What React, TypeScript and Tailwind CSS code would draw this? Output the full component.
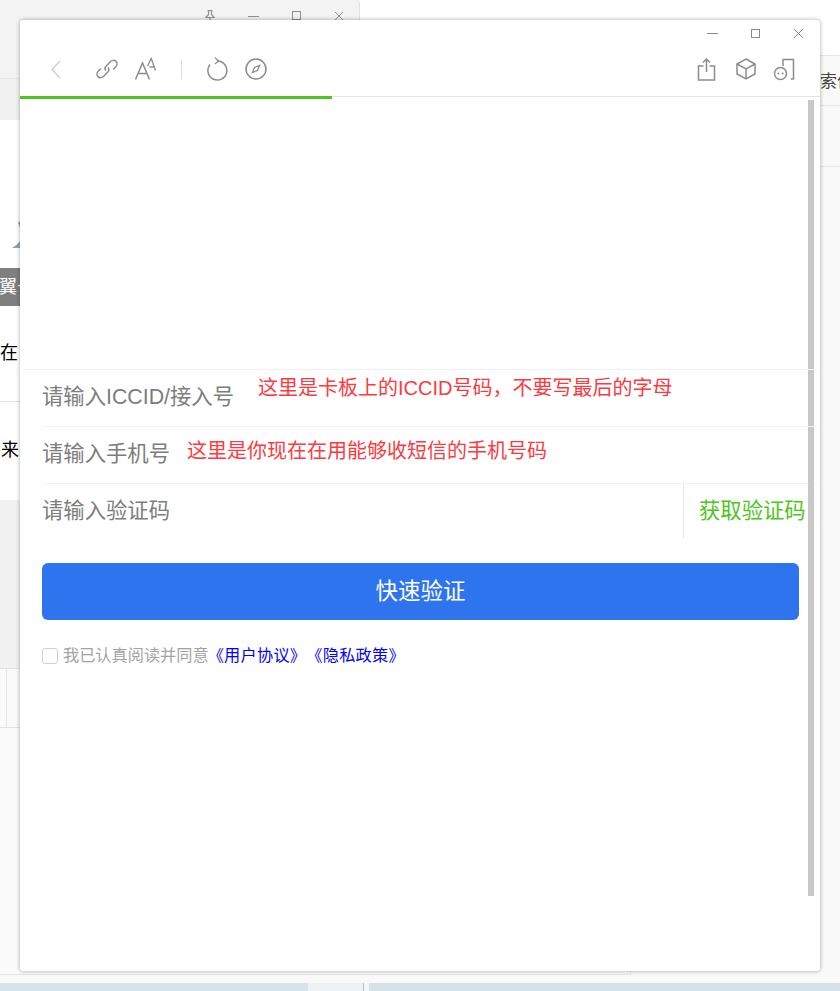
const cjk = "font-['Liberation_Sans','Noto_Sans_CJK_SC',sans-serif] [font-kerning:none] [text-spacing-trim:space-all]";

function Icon({ children, className = "" }: { children: React.ReactNode; className?: string }) {
  return (
    <svg width="24" height="24" viewBox="0 0 24 24" fill="none" stroke="currentColor" strokeWidth="1.5" className={className}>
      {children}
    </svg>
  );
}

function Backdrop() {
  return (
    <div className="absolute inset-0 bg-[#f9f9f9] overflow-hidden">
      <div className="absolute left-[360px] top-0 right-0 h-[56px] bg-white border-b border-[#e6e6e6]" />
      <div className="absolute left-[800px] top-[57px] right-0 h-[110px] border-b border-[#e6e6e6]">
        <div className={`${cjk} absolute left-[20px] top-[15px] text-[17px] leading-[20px] text-[#444] whitespace-nowrap`}>索价</div>
        <div className="absolute left-0 right-0 top-[48px] h-px bg-[#e6e6e6]" />
      </div>

      {/* window behind, top part */}
      <div className="absolute left-0 top-0 w-[360px] h-[78px] bg-[#f3f3f3] border-r border-[#e2e2e2] rounded-tr-[4px]">
        <div className="absolute top-[9px] left-[203px] text-[#909090]">
          <svg width="14" height="14" viewBox="0 0 14 14" fill="none" stroke="currentColor" strokeWidth="1.2">
            <path d="M4.5 1.5h5M5.5 1.5v4L3 8.5h8L8.5 5.5v-4M7 8.5V12" />
          </svg>
        </div>
        <div className="absolute top-[16px] left-[248px] w-[11px] h-px bg-[#909090]" />
        <div className="absolute top-[11px] left-[292px] w-[9px] h-[9px] border border-[#909090]" />
        <svg className="absolute top-[11px] left-[334px] text-[#909090]" width="10" height="10" viewBox="0 0 10 10" stroke="currentColor">
          <path d="M1 1l8 8M9 1l-8 8" />
        </svg>
      </div>
      <div className="absolute left-0 top-[78px] w-[20px] h-[42px] bg-[#f1f1f1] border-t border-[#e5e5e5]" />
      <div className="absolute left-0 top-[120px] w-[20px] h-[380px] bg-white" />
      <svg className="absolute left-[10px] top-[218px]" width="10" height="32" viewBox="0 0 10 32">
        <path d="M2 30C5 28 8 26 10 23V30Z" fill="#7fa9c2" />
        <path d="M8 5l2-2v7z" fill="#7fa9c2" />
      </svg>
      <div className={`${cjk} absolute left-0 top-[268px] w-[20px] h-[38px] bg-[#7f7f7f] text-white text-[18px] leading-[38px] overflow-hidden whitespace-nowrap -indent-px`}>
        翼号
      </div>
      <div className={`${cjk} absolute left-0 top-[340px] w-[20px] overflow-hidden text-[18px] leading-[26px] text-black whitespace-nowrap`}>
        在
      </div>
      <div className="absolute left-0 top-[401px] w-[20px] h-px bg-[#e4e4e4]" />
      <div className={`${cjk} absolute left-[1px] top-[437px] w-[19px] overflow-hidden text-[18px] leading-[26px] text-black whitespace-nowrap`}>
        来
      </div>
      <div className="absolute left-0 top-[500px] w-[20px] h-[168px] bg-[#f1f1f1]" />
      <div className="absolute left-0 top-[668px] w-[20px] h-[60px] bg-[#fafafa] border-t border-b border-[#e2e2e2]">
        <div className="absolute left-[6px] top-0 bottom-0 w-px bg-[#e6e6e6]" />
      </div>
      <div className="absolute left-0 top-[728px] w-[631px] h-[247px] bg-[#fbfbfb] border-r border-b border-[#e6e6e6]" />

      {/* wallpaper strip */}
      <div className="absolute left-0 right-0 top-[983px] h-[8px] flex">
        <div className="w-[308px] bg-[#d5e4ea]" />
        <div className="w-[56px] bg-[#ecf2f5] border-r border-[#b9c2c7]" />
        <div className="w-[5px] bg-[#f4f6f7]" />
        <div className="flex-1 bg-[#d5e2ea]" />
      </div>
    </div>
  );
}

function TitleBar() {
  return (
    <div className="h-[25px] flex justify-end items-center text-[#8a8a8a]">
      <div className="w-[11px] h-px bg-[#8a8a8a] mr-[33px] mt-[1px]" />
      <div className="w-[9px] h-[9px] border border-[#8a8a8a] mr-[33px] mt-[1px]" />
      <svg className="mr-[16px] mt-[1px]" width="11" height="11" viewBox="0 0 11 11" stroke="currentColor">
        <path d="M1 1l9 9M10 1l-9 9" />
      </svg>
    </div>
  );
}

function Toolbar() {
  return (
    <div className="h-[51px] flex items-center text-[#8c8c8c] pb-[3px]">
      <Icon className="ml-[24px] text-[#cfcfcf]">
        <path d="M16 4L8 12.5L16 21" />
      </Icon>
      <Icon className="ml-[27px]">
        <path d="M11 13.5c-1.2-1.2-1.2-3 0-4.2l4.6-4.7c1.6-1.6 4-1.6 5.4-.2 1.4 1.4 1.4 3.8-.2 5.4l-2.6 2.6" />
        <path d="M13 10.5c1.2 1.2 1.2 3 0 4.2l-4.6 4.7c-1.6 1.6-4 1.6-5.4.2-1.4-1.4-1.4-3.8.2-5.4l2.6-2.6" />
      </Icon>
      <Icon className="ml-[15px]">
        <path d="M1.5 22.5L8.5 6L15.5 22.5M4 16.5H13" />
        <path d="M13.5 9L17.2 1.5L21.5 13.5M15.5 10H21" strokeWidth="1.3" />
      </Icon>
      <div className="ml-[23px] w-px h-[19px] bg-[#dcdcdc]" />
      <Icon className="ml-[23px]">
        <path d="M12.5 4a9.5 9.5 0 1 1-7.4 3.4" />
        <path d="M10 .8L13.5 4L10 7" strokeWidth="1.3" />
      </Icon>
      <Icon className="ml-[15px]">
        <circle cx="12" cy="12" r="10" />
        <path d="M15.5 8.5L13.5 13.5L8.5 15.5L10.5 10.5Z" strokeWidth="1.3" />
      </Icon>
      <div className="flex-1" />
      <Icon>
        <path d="M8.5 9H3.5V23H19.5V9H14.5" />
        <path d="M11.5 15V2M8 5.5L11.5 2L15 5.5" />
      </Icon>
      <Icon className="ml-[15px]">
        <path d="M12 2L21 7V17L12 22L3 17V7Z" />
        <path d="M3 7L12 12L21 7M12 12V22" />
      </Icon>
      <Icon className="ml-[15px] mr-[23px]">
        <path d="M10 9V2.5H20.5V22H18" />
        <circle cx="7.5" cy="16.5" r="6" />
        <circle cx="5.3" cy="16.5" r="1" fill="currentColor" stroke="none" />
        <circle cx="9.7" cy="16.5" r="1" fill="currentColor" stroke="none" />
      </Icon>
    </div>
  );
}

function Row({
  placeholder,
  note,
  noteClass,
  first,
}: {
  placeholder: string;
  note: string;
  noteClass: string;
  first?: boolean;
}) {
  return (
    <div className={`relative h-[57px] mr-[3px] border-t border-[#f3f3f3] ${first ? "ml-[3px] pl-[19px]" : "ml-[22px]"}`}>
      <div className="text-[21.33px] leading-[55px] text-[#7d7d7d]">{placeholder}</div>
      <div className={`absolute whitespace-nowrap text-[20px] leading-[26px] text-[#fb3a41] ${noteClass}`}>{note}</div>
    </div>
  );
}

export default function App() {
  return (
    <div className={`${cjk} relative w-[840px] h-[991px] overflow-hidden`}>
      <Backdrop />
      <div className="absolute left-[20px] top-[20px] w-[800px] h-[951px] bg-white rounded-[3px] shadow-[0_0_4px_rgba(0,0,0,0.35)] flex flex-col">
        <TitleBar />
        <Toolbar />
        <div className="relative h-[4px] shrink-0 border-t border-[#e4e4e4]">
          <div className="absolute left-0 -top-[1px] h-[3px] w-[312px] bg-[#52c41a]" />
        </div>

        <div className="relative flex-1">
          <div className="absolute right-[6px] top-0 w-[6px] h-[796px] bg-[#c8c8c8]" />

          <div className="pt-[269px]">
            <Row
              first
              placeholder="请输入ICCID/接入号"
              note="这里是卡板上的ICCID号码，不要写最后的字母"
              noteClass="left-[235px] top-[5px]"
            />
            <Row
              placeholder="请输入手机号"
              note="这里是你现在在用能够收短信的手机号码"
              noteClass="left-[145px] top-[11px]"
            />
            <div className="ml-[22px] mr-[3px] h-[56px] flex border-t border-[#f3f3f3]">
              <div className="flex-1 text-[21.33px] leading-[55px] text-[#7d7d7d]">请输入验证码</div>
              <div className="w-[134px] border-l border-[#e6e6e6] pl-[15px] text-[21.33px] leading-[55px] text-[#4fc41a] whitespace-nowrap">
                获取验证码
              </div>
            </div>

            <div className="px-[22px] pr-[21px] mt-[24px]">
              <button className="w-full h-[57px] rounded-[6px] bg-[#2e74ef] text-white text-[22.5px]">快速验证</button>
            </div>

            <div className="mt-[27px] ml-[22px] flex items-center h-[17px] text-[16.2px] whitespace-nowrap">
              <span className="w-[16px] h-[16px] rounded-[3px] border border-[#cfcfcf] mr-[5px]" />
              <span className="text-[#a3a3a3]">我已认真阅读并同意</span>
              <span className="text-[#0000ff] -ml-px tracking-[0.25px]">《用户协议》《隐私政策》</span>
            </div>
          </div>
        </div>
      </div>
    </div>
  );
}
